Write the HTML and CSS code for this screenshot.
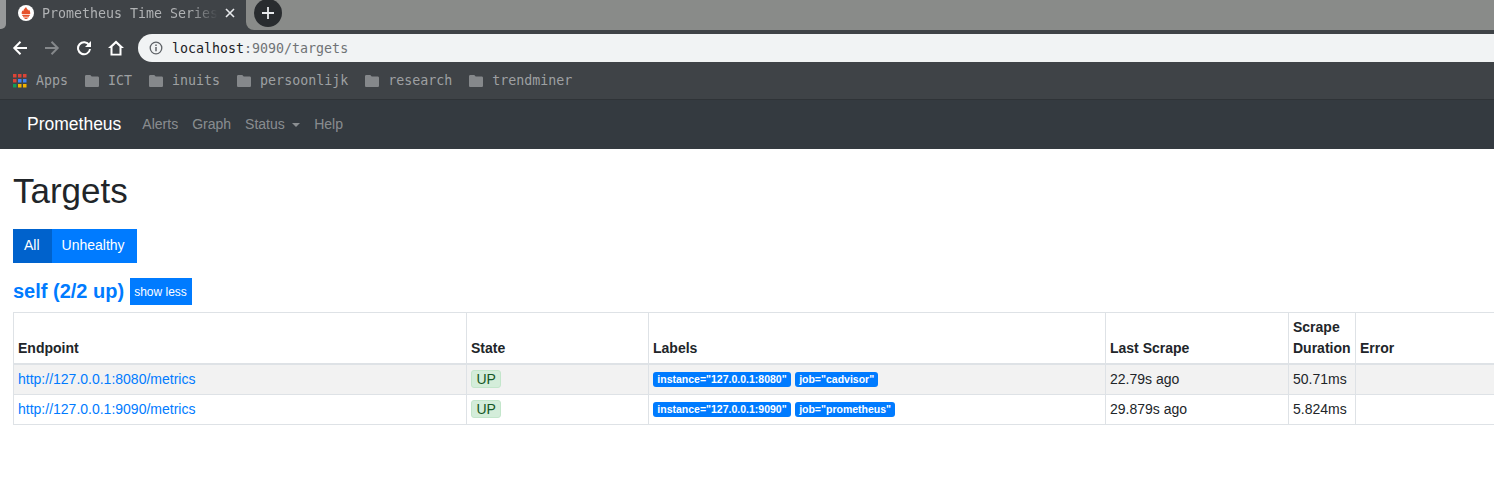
FILE: index.html
```html
<!DOCTYPE html>
<html lang="en">
<head>
    <meta charset="UTF-8">
    <meta name="viewport" content="width=device-width, initial-scale=1.0">
    <title>Prometheus Time Series Collection and Processing Server</title>
    <link rel="stylesheet" href="styles.css">
</head>
<body>
    <div class="tabstrip">
        <div class="tab-sliver"></div>
        <div class="tab">
            <svg class="favicon" viewBox="0 0 16 16" width="16" height="16">
                <circle cx="8" cy="8" r="8" fill="#fff"/>
                <path d="M8 2c.4 1.700 2 2.200 2.300 3.600.4-.3.6-.7.6-1.200 1.100 1.300 1.600 2.900 1.300 4.700H3.800c-.3-1.500 0-2.700.9-3.900.1.500.3.900.6 1.100C5.200 4.300 7 3.600 8 2z" fill="#e6522c"/>
                <path d="M4.300 9.800h7.400v1.100H4.300zM5 11.300h6v1H5zM6 12.700h4c-.3.800-1 1.300-2 1.300s-1.700-.5-2-1.300z" fill="#e6522c"/>
            </svg>
            <span class="tab-title">Prometheus Time Series</span>
            <svg class="tab-close" viewBox="0 0 10 10" width="10" height="10">
                <path d="M1 1l8 8M9 1l-8 8" stroke="#e8eaed" stroke-width="1.600"/>
            </svg>
        </div>
        <div class="strip-rest">
            <div class="new-tab">
                <svg viewBox="0 0 12 12" width="12" height="12">
                    <path d="M6 0v12M0 6h12" stroke="#e8eaed" stroke-width="1.800"/>
                </svg>
            </div>
        </div>
    </div>

    <div class="toolbar">
        <svg class="tool" viewBox="0 0 16 16" width="16" height="16">
            <path d="M15 8H2.500M8.500 1.800L2.300 8l6.200 6.200" fill="none" stroke="#fff" stroke-width="2"/>
        </svg>
        <svg class="tool" viewBox="0 0 16 16" width="16" height="16">
            <path d="M1 8h12.500M7.500 1.800L13.700 8l-6.200 6.200" fill="none" stroke="#85888b" stroke-width="2"/>
        </svg>
        <svg class="tool" viewBox="0 0 16 16" width="16" height="16">
            <path d="M13.200 5.200A6 6 0 1 0 14 9" fill="none" stroke="#fff" stroke-width="2"/>
            <path d="M15 1v6H9z" fill="#fff"/>
        </svg>
        <svg class="tool" viewBox="0 0 16 16" width="16" height="16">
            <path d="M8 .5L0 8h2.500v7.500h11V8H16zM4.500 13.800V6.800L8 3.400l3.500 3.400v7z" fill="#fff" fill-rule="evenodd"/>
        </svg>
        <div class="omnibox">
            <svg viewBox="0 0 14 14" width="14" height="14">
                <circle cx="7" cy="7" r="5.800" fill="none" stroke="#5f6368" stroke-width="1.300"/>
                <path d="M7 6v4.200M7 3.500v1.400" stroke="#5f6368" stroke-width="1.500"/>
            </svg>
            <span class="url"><span class="url-host">localhost</span>:9090/targets</span>
        </div>
    </div>

    <div class="bookmarks">
        <div class="bookmark">
            <svg class="apps-icon" viewBox="0 0 14 14" width="14" height="14">
                <path d="M0 0h3.500v3.500H0z" fill="#db4437"/><path d="M5 0h3.500v3.500H5z" fill="#db4437"/><path d="M10 0h3.500v3.500H10z" fill="#db4437"/>
                <path d="M0 5h3.500v3.500H0z" fill="#db4437"/><path d="M5 5h3.500v3.500H5z" fill="#4285f4"/><path d="M10 5h3.500v3.500H10z" fill="#4285f4"/>
                <path d="M0 10h3.500v3.500H0z" fill="#0f9d58"/><path d="M5 10h3.500v3.500H5z" fill="#f4b400"/><path d="M10 10h3.500v3.500H10z" fill="#f4b400"/>
            </svg>
            <span class="bm-label">Apps</span>
        </div>
        <div class="bookmark"><svg class="folder" viewBox="0 0 14 12" width="14" height="12"><path d="M1.300 0h4l1.400 1.500h6c.7 0 1.300.6 1.300 1.300v7.900c0 .7-.6 1.300-1.300 1.300H1.300C.6 12 0 11.400 0 10.700V1.300C0 .6.600 0 1.300 0z"/></svg><span class="bm-label">ICT</span></div>
        <div class="bookmark"><svg class="folder" viewBox="0 0 14 12" width="14" height="12"><path d="M1.300 0h4l1.400 1.500h6c.7 0 1.300.6 1.300 1.300v7.900c0 .7-.6 1.300-1.300 1.300H1.300C.6 12 0 11.400 0 10.700V1.300C0 .6.600 0 1.300 0z"/></svg><span class="bm-label">inuits</span></div>
        <div class="bookmark"><svg class="folder" viewBox="0 0 14 12" width="14" height="12"><path d="M1.300 0h4l1.400 1.500h6c.7 0 1.300.6 1.300 1.300v7.900c0 .7-.6 1.300-1.300 1.300H1.300C.6 12 0 11.400 0 10.700V1.300C0 .6.600 0 1.300 0z"/></svg><span class="bm-label">persoonlijk</span></div>
        <div class="bookmark"><svg class="folder" viewBox="0 0 14 12" width="14" height="12"><path d="M1.300 0h4l1.400 1.500h6c.7 0 1.300.6 1.300 1.300v7.900c0 .7-.6 1.300-1.300 1.300H1.300C.6 12 0 11.400 0 10.700V1.300C0 .6.600 0 1.300 0z"/></svg><span class="bm-label">research</span></div>
        <div class="bookmark"><svg class="folder" viewBox="0 0 14 12" width="14" height="12"><path d="M1.300 0h4l1.400 1.500h6c.7 0 1.300.6 1.300 1.300v7.900c0 .7-.6 1.300-1.300 1.300H1.300C.6 12 0 11.400 0 10.700V1.300C0 .6.600 0 1.300 0z"/></svg><span class="bm-label">trendminer</span></div>
    </div>

    <nav class="navbar">
        <a class="brand" href="#">Prometheus</a>
        <a class="nav-link" href="#">Alerts</a>
        <a class="nav-link" href="#">Graph</a>
        <a class="nav-link" href="#">Status <span class="caret"></span></a>
        <a class="nav-link" href="#">Help</a>
    </nav>

    <div class="container">
        <h1>Targets</h1>
        <div class="btn-group">
            <button class="btn active">All</button>
            <button class="btn">Unhealthy</button>
        </div>
        <div class="job-header">
            <a class="job-name" href="#">self (2/2 up)</a>
            <button class="btn-sm">show less</button>
        </div>
        <table>
            <thead>
                <tr>
                    <th class="col-endpoint">Endpoint</th>
                    <th class="col-state">State</th>
                    <th class="col-labels">Labels</th>
                    <th class="col-scrape">Last Scrape</th>
                    <th class="col-duration">Scrape Duration</th>
                    <th class="col-error">Error</th>
                </tr>
            </thead>
            <tbody>
                <tr class="striped">
                    <td><a href="#">http://127.0.0.1:8080/metrics</a></td>
                    <td><span class="state-up">UP</span></td>
                    <td><span class="label">instance="127.0.0.1:8080"</span> <span class="label">job="cadvisor"</span></td>
                    <td>22.79s ago</td>
                    <td>50.71ms</td>
                    <td></td>
                </tr>
                <tr>
                    <td><a href="#">http://127.0.0.1:9090/metrics</a></td>
                    <td><span class="state-up">UP</span></td>
                    <td><span class="label">instance="127.0.0.1:9090"</span> <span class="label">job="prometheus"</span></td>
                    <td>29.879s ago</td>
                    <td>5.824ms</td>
                    <td></td>
                </tr>
            </tbody>
        </table>
    </div>
</body>
</html>
```

FILE: styles.css
```css
body {
    margin: 0;
    width: 1494px;
    height: 481px;
    overflow: hidden;
    background-color: #fff;
    font-family: "Liberation Sans", Arial, sans-serif;
    font-size: 14px;
    line-height: 21px;
    color: #212529;
}

a {
    text-decoration: none;
}

/* browser frame */
.tabstrip {
    display: flex;
    align-items: flex-start;
    height: 30px;
    background-color: #3f4347;
}

.tab-sliver {
    width: 6px;
    height: 29px;
    background-color: #97999a;
    border-bottom-right-radius: 5px;
}

.tab {
    display: flex;
    align-items: center;
    width: 240px;
    height: 30px;
    box-sizing: border-box;
    padding: 0 11px 4px 12px;
}

.favicon {
    flex: none;
}

.tab-title {
    width: 176px;
    margin-left: 8px;
    white-space: nowrap;
    font-family: "DejaVu Sans Mono", monospace;
    font-size: 13.3px;
    color: #b0b2b4;
    -webkit-mask-image: linear-gradient(to right, #000 148px, transparent 176px);
    mask-image: linear-gradient(to right, #000 148px, transparent 176px);
}

.tab-close {
    margin-left: 7px;
}

.strip-rest {
    flex: 1;
    height: 30px;
    padding-left: 8px;
    background-color: #898b89;
    border-bottom-left-radius: 8px;
}

.new-tab {
    display: flex;
    align-items: center;
    justify-content: center;
    width: 28px;
    height: 28px;
    margin-top: -1px;
    border-radius: 50%;
    background-color: #292c2f;
}

.toolbar {
    display: flex;
    align-items: center;
    height: 33px;
    box-sizing: border-box;
    padding: 3px 0 0 12px;
    background-color: #3f4347;
}

.tool {
    margin-right: 16px;
    flex: none;
}

.omnibox {
    display: flex;
    align-items: center;
    flex: 1;
    height: 28px;
    margin-left: -2px;
    padding-left: 11px;
    border-radius: 14px 0 0 14px;
    background-color: #f1f3f4;
}

.url {
    margin-left: 9px;
    font-family: "DejaVu Sans Mono", monospace;
    font-size: 13.3px;
    color: #6f7275;
}

.url-host {
    color: #202124;
}

.bookmarks {
    display: flex;
    align-items: center;
    height: 36px;
    padding-left: 13px;
    background-color: #3f4347;
    border-bottom: 1px solid #2f3337;
    font-family: "DejaVu Sans Mono", monospace;
    font-size: 13.3px;
    color: #9ea0a2;
}

.bookmark {
    display: flex;
    align-items: center;
    margin-right: 16px;
}

.bm-label {
    margin-bottom: 2px;
}

.apps-icon {
    margin-right: 9px;
}

.folder {
    margin: 0 9px 0 1px;
    fill: #85888b;
}

/* prometheus page */
.navbar {
    display: flex;
    align-items: center;
    height: 49px;
    padding-left: 27px;
    background-color: #343a40;
}

.brand {
    margin-right: 14px;
    font-size: 17.5px;
    color: #fff;
}

.nav-link {
    padding: 0 7px;
    color: rgba(255, 255, 255, 0.43);
}

.caret {
    display: inline-block;
    margin-left: 3.500px;
    vertical-align: 2px;
    border-top: 4.500px solid;
    border-left: 4.500px solid transparent;
    border-right: 4.500px solid transparent;
}

.container {
    padding-left: 13px;
}

h1 {
    margin: 21px 0 17px;
    font-size: 35px;
    font-weight: 400;
    line-height: 42px;
}

.btn-group {
    display: flex;
}

.btn {
    height: 34px;
    padding: 0 12px 2px 10px;
    border: none;
    background-color: #007bff;
    color: #fff;
    font: inherit;
}

.btn.active {
    padding: 0 12px 2px 11px;
    background-color: #0062cc;
}

.job-header {
    display: flex;
    align-items: center;
    margin-top: 15px;
}

.job-name {
    font-size: 20px;
    font-weight: 700;
    color: #007bff;
}

.btn-sm {
    height: 27px;
    margin-left: 6px;
    padding: 0 5px 0 4px;
    border: none;
    background-color: #007bff;
    color: #fff;
    font-family: inherit;
    font-size: 12px;
}

table {
    width: 1490px;
    margin-top: 7px;
    table-layout: fixed;
    border-collapse: collapse;
}

th, td {
    padding: 4px;
    border: 1px solid #dee2e6;
    text-align: left;
    vertical-align: middle;
}

th {
    vertical-align: bottom;
    border-bottom-width: 2px;
}

td a {
    color: #007bff;
}

.col-endpoint { width: 444px; }
.col-state { width: 173px; }
.col-labels { width: 448px; }
.col-scrape { width: 174px; }
.col-duration { width: 58px; }

.striped td {
    background-color: #f2f2f2;
}

.state-up {
    display: inline-block;
    padding: 0 4.500px;
    border-radius: 3px;
    background-color: #d4edda;
    border: 1px solid #c3e6cb;
    line-height: 16px;
    color: #155724;
}

.label {
    display: inline-block;
    padding: 0 4.300px;
    border-radius: 3px;
    background-color: #007bff;
    color: #fff;
    font-size: 10.500px;
    font-weight: 700;
    line-height: 15px;
    vertical-align: 1px;
}
```
